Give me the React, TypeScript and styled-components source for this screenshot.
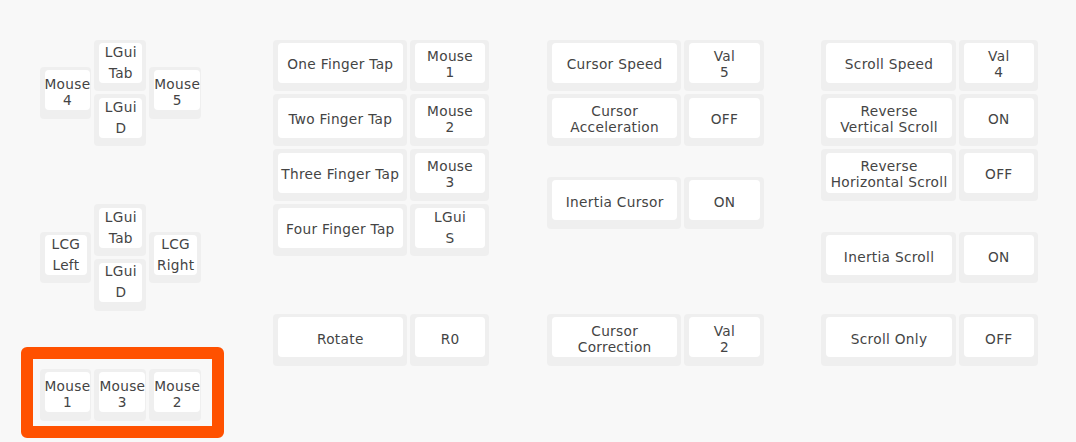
import React from "react";
import styled, { createGlobalStyle } from "styled-components";

const U = 54.9;

const GlobalStyle = createGlobalStyle`
  html, body {
    margin: 0;
    padding: 0;
    background: #f8f8f8;
  }
  body {
    width: 1076px;
    height: 442px;
    overflow: hidden;
    font-family: "DejaVu Sans", "Noto Sans CJK JP", sans-serif;
  }
`;

const Canvas = styled.div`
  display: grid;
  grid-template-columns: repeat(74, ${U / 4}px);
  grid-auto-rows: ${U / 2}px;
  padding: 39.5px 0 0 39.5px;
`;

type Pos = { $x: number; $y: number; $w?: number };

const KeyOuter = styled.div<Pos>`
  grid-column: ${(p) => p.$x * 4 + 1} / span ${(p) => (p.$w ?? 1) * 4};
  grid-row: ${(p) => p.$y * 2 + 1} / span 2;
  margin: 0 3px 3px 0;
  background: #efefef;
  border-radius: 4px;
  padding: 3.5px 4px 8.5px 5px;
  display: flex;
`;

const KeyFace = styled.div<{ $mod?: boolean }>`
  flex: 1;
  background: #ffffff;
  border-radius: 4px;
  display: flex;
  flex-direction: column;
  align-items: center;
  justify-content: center;
  text-align: center;
  font-size: 13.7px;
  letter-spacing: 0.3px;
  line-height: ${(p) => (p.$mod ? "21px" : "16px")};
  padding-top: ${(p) => (p.$mod ? "0" : "3px")};
  color: #444444;
  white-space: nowrap;
`;

const Highlight = styled.div`
  grid-column: 1 / span 12;
  grid-row: 13 / span 2;
  margin: -22px -20px -14px -18.5px;
  border: 12px solid #ff5100;
  border-radius: 6px;
  pointer-events: none;
`;

type KeyDef = { x: number; y: number; w?: number; lines: string[]; mod?: boolean };

const Key: React.FC<KeyDef> = ({ x, y, w, lines, mod }) => (
  <KeyOuter $x={x} $y={y} $w={w}>
    <KeyFace $mod={mod}>
      {lines.map((l, i) => (
        <span key={i}>{l}</span>
      ))}
    </KeyFace>
  </KeyOuter>
);

const keys: KeyDef[] = [
  // cluster 1
  { x: 1, y: 0, lines: ["LGui", "Tab"], mod: true },
  { x: 0, y: 0.5, lines: ["Mouse", "4"] },
  { x: 2, y: 0.5, lines: ["Mouse", "5"] },
  { x: 1, y: 1, lines: ["LGui", "D"], mod: true },
  // cluster 2
  { x: 1, y: 3, lines: ["LGui", "Tab"], mod: true },
  { x: 0, y: 3.5, lines: ["LCG", "Left"], mod: true },
  { x: 2, y: 3.5, lines: ["LCG", "Right"], mod: true },
  { x: 1, y: 4, lines: ["LGui", "D"], mod: true },
  // cluster 3
  { x: 0, y: 6, lines: ["Mouse", "1"] },
  { x: 1, y: 6, lines: ["Mouse", "3"] },
  { x: 2, y: 6, lines: ["Mouse", "2"] },
  // taps
  { x: 4.25, y: 0, w: 2.5, lines: ["One Finger Tap"] },
  { x: 6.75, y: 0, w: 1.5, lines: ["Mouse", "1"] },
  { x: 4.25, y: 1, w: 2.5, lines: ["Two Finger Tap"] },
  { x: 6.75, y: 1, w: 1.5, lines: ["Mouse", "2"] },
  { x: 4.25, y: 2, w: 2.5, lines: ["Three Finger Tap"] },
  { x: 6.75, y: 2, w: 1.5, lines: ["Mouse", "3"] },
  { x: 4.25, y: 3, w: 2.5, lines: ["Four Finger Tap"] },
  { x: 6.75, y: 3, w: 1.5, lines: ["LGui", "S"], mod: true },
  { x: 4.25, y: 5, w: 2.5, lines: ["Rotate"] },
  { x: 6.75, y: 5, w: 1.5, lines: ["R0"] },
  // cursor
  { x: 9.25, y: 0, w: 2.5, lines: ["Cursor Speed"] },
  { x: 11.75, y: 0, w: 1.5, lines: ["Val", "5"] },
  { x: 9.25, y: 1, w: 2.5, lines: ["Cursor", "Acceleration"] },
  { x: 11.75, y: 1, w: 1.5, lines: ["OFF"] },
  { x: 9.25, y: 2.5, w: 2.5, lines: ["Inertia Cursor"] },
  { x: 11.75, y: 2.5, w: 1.5, lines: ["ON"] },
  { x: 9.25, y: 5, w: 2.5, lines: ["Cursor", "Correction"] },
  { x: 11.75, y: 5, w: 1.5, lines: ["Val", "2"] },
  // scroll
  { x: 14.25, y: 0, w: 2.5, lines: ["Scroll Speed"] },
  { x: 16.75, y: 0, w: 1.5, lines: ["Val", "4"] },
  { x: 14.25, y: 1, w: 2.5, lines: ["Reverse", "Vertical Scroll"] },
  { x: 16.75, y: 1, w: 1.5, lines: ["ON"] },
  { x: 14.25, y: 2, w: 2.5, lines: ["Reverse", "Horizontal Scroll"] },
  { x: 16.75, y: 2, w: 1.5, lines: ["OFF"] },
  { x: 14.25, y: 3.5, w: 2.5, lines: ["Inertia Scroll"] },
  { x: 16.75, y: 3.5, w: 1.5, lines: ["ON"] },
  { x: 14.25, y: 5, w: 2.5, lines: ["Scroll Only"] },
  { x: 16.75, y: 5, w: 1.5, lines: ["OFF"] },
];

export default function App() {
  return (
    <>
      <GlobalStyle />
      <Canvas>
        {keys.map((k, i) => (
          <Key key={i} {...k} />
        ))}
        <Highlight />
      </Canvas>
    </>
  );
}
